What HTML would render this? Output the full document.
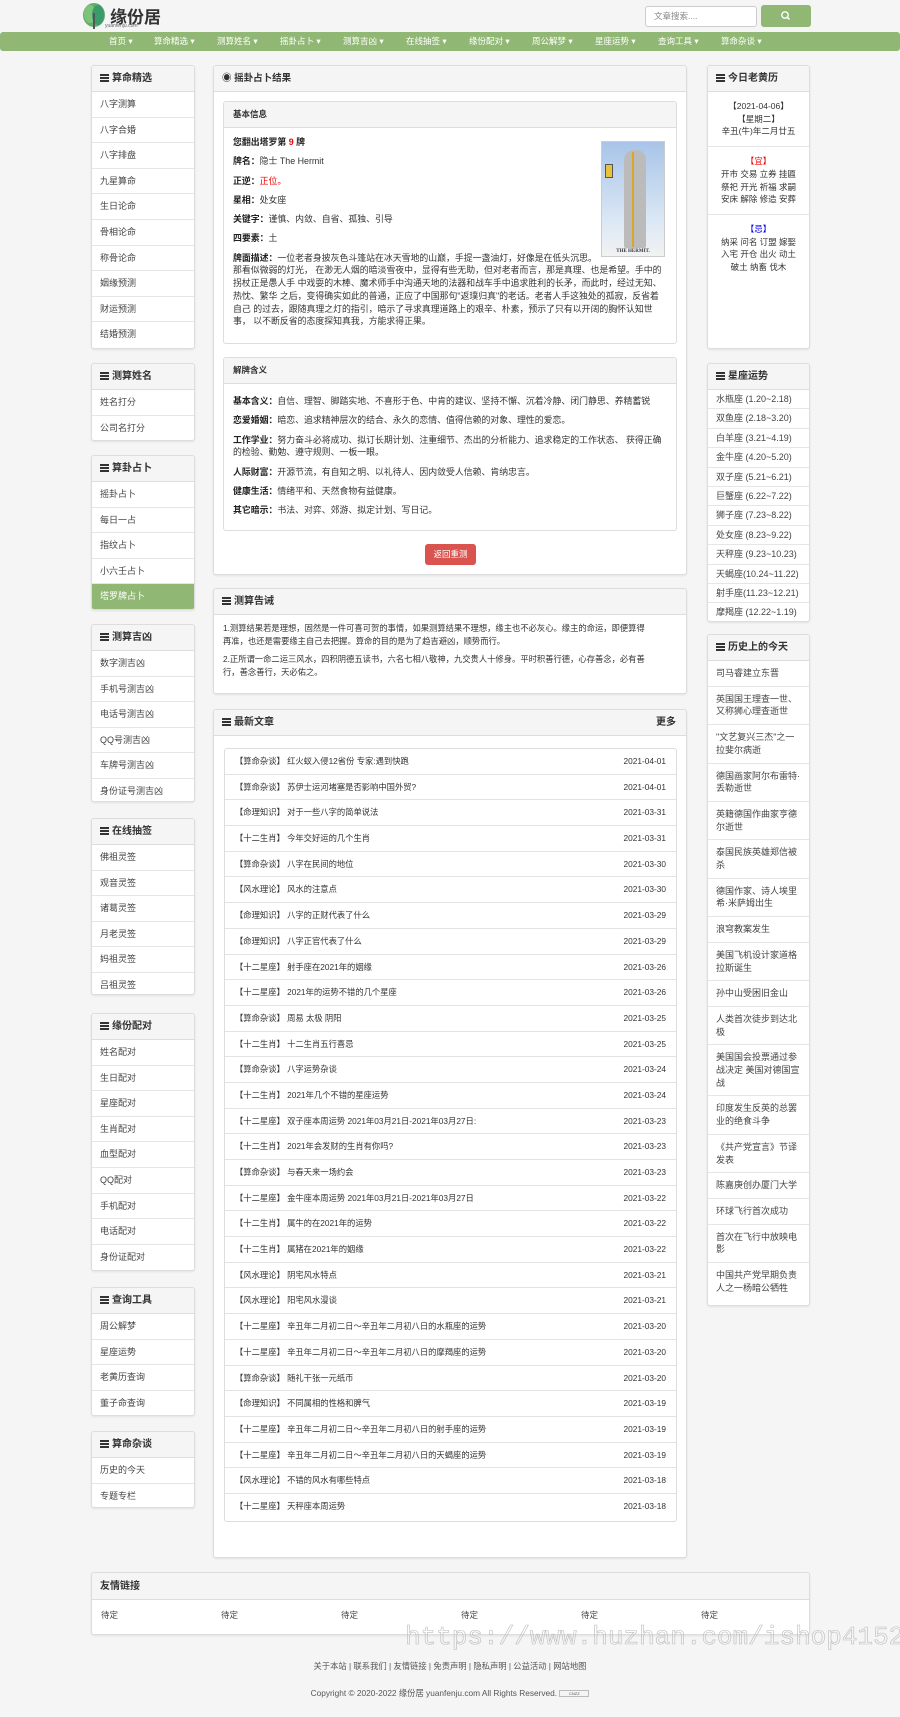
<!DOCTYPE html>
<html><head><meta charset="utf-8">
<style>
*{margin:0;padding:0;box-sizing:border-box}
body{width:900px;height:1717px;background:#f5f5f5;font-family:"Liberation Sans","Noto Sans CJK SC",sans-serif;color:#333;font-size:9px;position:relative;overflow:hidden}
.abs{position:absolute}
.nav{position:absolute;left:0;top:32px;width:900px;height:19px;background:#90b874;border-radius:3px;color:#fff;font-size:8.5px;line-height:19px}
.nav span{position:absolute;top:0;white-space:nowrap}
.panel{position:absolute;background:#fff;border:1px solid #ddd;border-radius:3px;box-shadow:0 1px 2px rgba(0,0,0,.08);overflow:hidden}
.ph{background:#f5f5f5;border-bottom:1px solid #ddd;height:26px;line-height:25px;padding-left:8px;font-size:10px;font-weight:bold;color:#333;white-space:nowrap}
.ico{display:inline-block;width:9px;height:8px;vertical-align:-1px;margin-right:3px;background:linear-gradient(#333 0 2px,transparent 2px 3px,#333 3px 5px,transparent 5px 6px,#333 6px 8px)}
.li{height:25.6px;line-height:25px;border-bottom:1px solid #e6e6e6;padding-left:8px;font-size:9px;color:#444;white-space:nowrap}
.li:last-child{border-bottom:none}
.sl{height:19.4px;line-height:19px}
.act{background:#90b874;color:#fff}
.hi{border-bottom:1px solid #e6e6e6;padding:6px 8px 6px;font-size:9px;line-height:12.7px;color:#444;white-space:nowrap}
.card{position:absolute;border:1px solid #ddd;border-radius:3px;background:#fff;overflow:hidden}
.ch{background:#f5f5f5;border-bottom:1px solid #ddd;height:26px;line-height:25px;padding-left:9px;font-size:8.5px;font-weight:bold}
.p{font-size:8.3px;line-height:12.7px;color:#333}
.card .p{font-size:8.9px;white-space:nowrap}
.p b{color:#222}
.ar{height:25.7px;line-height:25px;border-bottom:1px solid #e3e3e3;padding:0 10px;font-size:8.3px;color:#333;position:relative;white-space:nowrap}
.ar i{font-style:normal;position:absolute;right:10px;top:0}
.c{text-align:center;font-size:8.5px;line-height:12.7px;color:#333}
</style></head><body>
<div class="abs" style="left:82px;top:3px;width:24px;height:26px">
<svg width="24" height="27" viewBox="0 0 24 27"><ellipse cx="12" cy="12" rx="11" ry="12" fill="#5fae6a"/><ellipse cx="8" cy="11" rx="6" ry="9" fill="#7dc47a"/><ellipse cx="16" cy="12" rx="6" ry="10" fill="#3d9a6a"/><rect x="11" y="10" width="2" height="16" fill="#555"/></svg></div>
<div class="abs" style="left:110px;top:3px;font-size:17px;font-weight:bold;color:#333">缘份居</div>
<div class="abs" style="left:105px;top:23px;font-size:5px;color:#666">yuanfenju.com</div>
<div class="abs" style="left:645px;top:6px;width:112px;height:21px;border:1px solid #ccc;border-radius:3px;background:#fff;font-size:8.5px;color:#888;line-height:19px;padding-left:8px">文章搜索....</div>
<div class="abs" style="left:761px;top:5px;width:50px;height:22px;border-radius:3px;background:#90b874">
<svg width="50" height="22"><circle cx="24" cy="10" r="3.2" fill="none" stroke="#fff" stroke-width="1.4"/><line x1="26.3" y1="12.3" x2="28.5" y2="14.5" stroke="#fff" stroke-width="1.5"/></svg></div>
<div class="nav">
<span style="left:109px">首页 ▾</span><span style="left:154px">算命精选 ▾</span><span style="left:217px">测算姓名 ▾</span><span style="left:280px">摇卦占卜 ▾</span><span style="left:343px">测算吉凶 ▾</span><span style="left:406px">在线抽签 ▾</span><span style="left:469px">缘份配对 ▾</span><span style="left:532px">周公解梦 ▾</span><span style="left:595px">星座运势 ▾</span><span style="left:658px">查询工具 ▾</span><span style="left:721px">算命杂谈 ▾</span>
</div>

<div class="panel" style="left:91px;top:65px;width:104px;height:284px"><div class="ph"><span class="ico"></span>算命精选</div>
<div class="li">八字测算</div><div class="li">八字合婚</div><div class="li">八字排盘</div><div class="li">九星算命</div><div class="li">生日论命</div><div class="li">骨相论命</div><div class="li">称骨论命</div><div class="li">姻缘预测</div><div class="li">财运预测</div><div class="li">结婚预测</div></div>
<div class="panel" style="left:91px;top:363px;width:104px;height:78px"><div class="ph"><span class="ico"></span>测算姓名</div>
<div class="li">姓名打分</div><div class="li">公司名打分</div></div>
<div class="panel" style="left:91px;top:455px;width:104px;height:155px"><div class="ph"><span class="ico"></span>算卦占卜</div>
<div class="li">摇卦占卜</div><div class="li">每日一占</div><div class="li">指纹占卜</div><div class="li">小六壬占卜</div><div class="li act">塔罗牌占卜</div></div>
<div class="panel" style="left:91px;top:624px;width:104px;height:178px"><div class="ph"><span class="ico"></span>测算吉凶</div>
<div class="li">数字测吉凶</div><div class="li">手机号测吉凶</div><div class="li">电话号测吉凶</div><div class="li">QQ号测吉凶</div><div class="li">车牌号测吉凶</div><div class="li">身份证号测吉凶</div></div>
<div class="panel" style="left:91px;top:818px;width:104px;height:177px"><div class="ph"><span class="ico"></span>在线抽签</div>
<div class="li">佛祖灵签</div><div class="li">观音灵签</div><div class="li">诸葛灵签</div><div class="li">月老灵签</div><div class="li">妈祖灵签</div><div class="li">吕祖灵签</div></div>
<div class="panel" style="left:91px;top:1013px;width:104px;height:258px"><div class="ph"><span class="ico"></span>缘份配对</div>
<div class="li">姓名配对</div><div class="li">生日配对</div><div class="li">星座配对</div><div class="li">生肖配对</div><div class="li">血型配对</div><div class="li">QQ配对</div><div class="li">手机配对</div><div class="li">电话配对</div><div class="li">身份证配对</div></div>
<div class="panel" style="left:91px;top:1287px;width:104px;height:129px"><div class="ph"><span class="ico"></span>查询工具</div>
<div class="li">周公解梦</div><div class="li">星座运势</div><div class="li">老黄历查询</div><div class="li">董子命查询</div></div>
<div class="panel" style="left:91px;top:1431px;width:104px;height:77px"><div class="ph"><span class="ico"></span>算命杂谈</div>
<div class="li">历史的今天</div><div class="li">专题专栏</div></div>

<div class="panel" style="left:213px;top:65px;width:474px;height:510px"><div class="ph" style="font-size:9.5px">◉ 摇卦占卜结果</div>
<div class="card" style="left:9px;top:35px;width:454px;height:243px"><div class="ch">基本信息</div>
<div class="p" style="position:absolute;left:9px;top:34px;width:440px">
<div style="height:19.3px"><b>您翻出塔罗第 <span style="color:#e00">9</span> 牌</b></div>
<div style="height:19.3px"><b>牌名：</b>隐士 The Hermit</div>
<div style="height:19.3px"><b>正逆：</b><span style="color:#e00">正位。</span></div>
<div style="height:19.3px"><b>星相：</b>处女座</div>
<div style="height:19.3px"><b>关键字：</b>谨慎、内敛、自省、孤独、引导</div>
<div style="height:19.3px"><b>四要素：</b>土</div>
<div><b>牌面描述：</b>一位老者身披灰色斗篷站在冰天雪地的山巅，手提一盏油灯，好像是在低头沉思。<br>那看似微弱的灯光， 在渺无人烟的暗淡雪夜中，显得有些无助，但对老者而言，那是真理、也是希望。手中的<br>拐杖正是愚人手 中戏耍的木棒、魔术师手中沟通天地的法器和战车手中追求胜利的长矛，而此时，经过无知、<br>热忱、繁华 之后，变得确实如此的普通，正应了中国那句"返璞归真"的老话。老者人手这独处的孤寂，反省着<br>自己 的过去，跟随真理之灯的指引，暗示了寻求真理道路上的艰辛、朴素，预示了只有以开阔的胸怀认知世<br>事， 以不断反省的态度探知真我，方能求得正果。</div>
</div>
<div style="position:absolute;left:377px;top:39px;width:64px;height:116px;border:1px solid #ccc;background:linear-gradient(#a8c4e8,#dce8f5 70%,#f2f2f2)">
<div style="position:absolute;left:22px;top:8px;width:22px;height:98px;background:#bbb;border-radius:10px 10px 2px 2px"></div>
<div style="position:absolute;left:30px;top:10px;width:2px;height:95px;background:#d9a82a"></div>
<div style="position:absolute;left:3px;top:22px;width:8px;height:14px;background:#e8c33a;border:1px solid #555"></div>
<div style="position:absolute;left:0;bottom:2px;width:62px;text-align:center;font-size:5px;font-weight:bold;font-family:'Liberation Serif',serif">THE HERMIT.</div></div>
</div>
<div class="card" style="left:9px;top:291px;width:454px;height:174px"><div class="ch">解牌含义</div>
<div class="p" style="position:absolute;left:9px;top:37px;width:440px">
<div style="height:19.3px"><b>基本含义：</b>自信、理智、脚踏实地、不喜形于色、中肯的建议、坚持不懈、沉着冷静、闭门静思、养精蓄锐</div>
<div style="height:19.3px"><b>恋爱婚姻：</b>暗恋、追求精神层次的结合、永久的恋情、值得信赖的对象、理性的爱恋。</div>
<div style="height:32px"><b>工作学业：</b>努力奋斗必将成功、拟订长期计划、注重细节、杰出的分析能力、追求稳定的工作状态、 获得正确<br>的检验、勤勉、遵守规则、一板一眼。</div>
<div style="height:19.3px"><b>人际财富：</b>开源节流，有自知之明、以礼待人、因内敛受人信赖、肯纳忠言。</div>
<div style="height:19.3px"><b>健康生活：</b>情绪平和、天然食物有益健康。</div>
<div><b>其它暗示：</b>书法、对弈、郊游、拟定计划、写日记。</div>
</div></div>
<div class="abs" style="left:211px;top:478px;width:51px;height:21px;background:#d9534f;border-radius:3px;color:#fff;font-size:8.5px;line-height:21px;text-align:center">返回重测</div>
</div>

<div class="panel" style="left:213px;top:588px;width:474px;height:106px"><div class="ph"><span class="ico"></span>测算告诫</div>
<div class="p" style="padding:7px 9px 0">1.测算结果若是理想，固然是一件可喜可贺的事情，如果测算结果不理想，缘主也不必灰心。缘主的命运，即便算得<br>再准，也还是需要缘主自己去把握。算命的目的是为了趋吉避凶，顺势而行。<div style="height:6px"></div>2.正所谓一命二运三风水，四积阴德五读书，六名七相八敬神，九交贵人十修身。平时积善行德，心存善念，必有善<br>行，善念善行，天必佑之。</div></div>

<div class="panel" style="left:213px;top:709px;width:474px;height:849px"><div class="ph"><span class="ico"></span>最新文章<span style="position:absolute;right:10px">更多</span></div>
<div class="card" style="left:10px;top:38px;width:453px;height:774px">
<div class="ar">【算命杂谈】 红火蚁入侵12省份 专家:遇到快跑<i>2021-04-01</i></div>
<div class="ar">【算命杂谈】 苏伊士运河堵塞是否影响中国外贸?<i>2021-04-01</i></div>
<div class="ar">【命理知识】 对于一些八字的简单说法<i>2021-03-31</i></div>
<div class="ar">【十二生肖】 今年交好运的几个生肖<i>2021-03-31</i></div>
<div class="ar">【算命杂谈】 八字在民间的地位<i>2021-03-30</i></div>
<div class="ar">【风水理论】 风水的注意点<i>2021-03-30</i></div>
<div class="ar">【命理知识】 八字的正财代表了什么<i>2021-03-29</i></div>
<div class="ar">【命理知识】 八字正官代表了什么<i>2021-03-29</i></div>
<div class="ar">【十二星座】 射手座在2021年的姻缘<i>2021-03-26</i></div>
<div class="ar">【十二星座】 2021年的运势不错的几个星座<i>2021-03-26</i></div>
<div class="ar">【算命杂谈】 周易 太极 阴阳<i>2021-03-25</i></div>
<div class="ar">【十二生肖】 十二生肖五行喜忌<i>2021-03-25</i></div>
<div class="ar">【算命杂谈】 八字运势杂谈<i>2021-03-24</i></div>
<div class="ar">【十二生肖】 2021年几个不错的星座运势<i>2021-03-24</i></div>
<div class="ar">【十二星座】 双子座本周运势 2021年03月21日-2021年03月27日:<i>2021-03-23</i></div>
<div class="ar">【十二生肖】 2021年会发财的生肖有你吗?<i>2021-03-23</i></div>
<div class="ar">【算命杂谈】 与春天来一场约会<i>2021-03-23</i></div>
<div class="ar">【十二星座】 金牛座本周运势 2021年03月21日-2021年03月27日<i>2021-03-22</i></div>
<div class="ar">【十二生肖】 属牛的在2021年的运势<i>2021-03-22</i></div>
<div class="ar">【十二生肖】 属猪在2021年的姻缘<i>2021-03-22</i></div>
<div class="ar">【风水理论】 阴宅风水特点<i>2021-03-21</i></div>
<div class="ar">【风水理论】 阳宅风水漫谈<i>2021-03-21</i></div>
<div class="ar">【十二星座】 辛丑年二月初二日～辛丑年二月初八日的水瓶座的运势<i>2021-03-20</i></div>
<div class="ar">【十二星座】 辛丑年二月初二日～辛丑年二月初八日的摩羯座的运势<i>2021-03-20</i></div>
<div class="ar">【算命杂谈】 随礼干张一元纸币<i>2021-03-20</i></div>
<div class="ar">【命理知识】 不同属相的性格和脾气<i>2021-03-19</i></div>
<div class="ar">【十二星座】 辛丑年二月初二日～辛丑年二月初八日的射手座的运势<i>2021-03-19</i></div>
<div class="ar">【十二星座】 辛丑年二月初二日～辛丑年二月初八日的天蝎座的运势<i>2021-03-19</i></div>
<div class="ar">【风水理论】 不错的风水有哪些特点<i>2021-03-18</i></div>
<div class="ar" style="border-bottom:none">【十二星座】 天秤座本周运势<i>2021-03-18</i></div>
</div></div>

<div class="panel" style="left:707px;top:65px;width:103px;height:284px"><div class="ph"><span class="ico"></span>今日老黄历</div>
<div class="c" style="padding:8px 0 8px;border-bottom:1px solid #e6e6e6">【2021-04-06】<br>【星期二】<br>辛丑(牛)年二月廿五</div>
<div class="c" style="padding:8px 0 8px;border-bottom:1px solid #e6e6e6"><span style="color:#e00">【宜】</span><br>开市 交易 立券 挂匾<br>祭祀 开光 祈福 求嗣<br>安床 解除 修造 安葬</div>
<div class="c" style="padding:8px 0"><span style="color:#00e">【忌】</span><br>纳采 问名 订盟 嫁娶<br>入宅 开仓 出火 动土<br>破土 纳畜 伐木</div></div>
<div class="panel" style="left:707px;top:363px;width:103px;height:259px"><div class="ph"><span class="ico"></span>星座运势</div>
<div class="li sl">水瓶座 (1.20~2.18)</div><div class="li sl">双鱼座 (2.18~3.20)</div><div class="li sl">白羊座 (3.21~4.19)</div><div class="li sl">金牛座 (4.20~5.20)</div><div class="li sl">双子座 (5.21~6.21)</div><div class="li sl">巨蟹座 (6.22~7.22)</div><div class="li sl">狮子座 (7.23~8.22)</div><div class="li sl">处女座 (8.23~9.22)</div><div class="li sl">天秤座 (9.23~10.23)</div><div class="li sl">天蝎座(10.24~11.22)</div><div class="li sl">射手座(11.23~12.21)</div><div class="li sl">摩羯座 (12.22~1.19)</div></div>
<div class="panel" style="left:707px;top:634px;width:103px;height:672px"><div class="ph"><span class="ico"></span>历史上的今天</div>
<div class="hi">司马睿建立东晋</div>
<div class="hi">英国国王理查一世、<br>又称狮心理查逝世</div>
<div class="hi">"文艺复兴三杰"之一<br>拉斐尔病逝</div>
<div class="hi">德国画家阿尔布雷特·<br>丢勒逝世</div>
<div class="hi">英籍德国作曲家亨德<br>尔逝世</div>
<div class="hi">泰国民族英雄郑信被<br>杀</div>
<div class="hi">德国作家、诗人埃里<br>希·米萨姆出生</div>
<div class="hi">浪穹教案发生</div>
<div class="hi">美国飞机设计家道格<br>拉斯诞生</div>
<div class="hi">孙中山受困旧金山</div>
<div class="hi">人类首次徒步到达北<br>极</div>
<div class="hi">美国国会投票通过参<br>战决定 美国对德国宣<br>战</div>
<div class="hi">印度发生反英的总罢<br>业的绝食斗争</div>
<div class="hi">《共产党宣言》节译<br>发表</div>
<div class="hi">陈嘉庚创办厦门大学</div>
<div class="hi">环球飞行首次成功</div>
<div class="hi">首次在飞行中放映电<br>影</div>
<div class="hi" style="border-bottom:none">中国共产党早期负责<br>人之一杨暗公牺牲</div></div>

<div class="panel" style="left:91px;top:1572px;width:719px;height:63px"><div class="ph" style="height:27px;line-height:27px">友情链接</div>
<div style="position:relative;font-size:8.5px;color:#444;height:34px;line-height:30px">
<span class="abs" style="left:9px">待定</span><span class="abs" style="left:129px">待定</span><span class="abs" style="left:249px">待定</span><span class="abs" style="left:369px">待定</span><span class="abs" style="left:489px">待定</span><span class="abs" style="left:609px">待定</span></div></div>
<div class="abs" style="left:0;top:1660px;width:900px;text-align:center;font-size:8.3px;color:#555">关于本站 | 联系我们 | 友情链接 | 免责声明 | 隐私声明 | 公益活动 | 网站地图</div>
<div class="abs" style="left:0;top:1687px;width:900px;text-align:center;font-size:8.3px;color:#555">Copyright © 2020-2022 缘份居 yuanfenju.com All Rights Reserved. <span style="display:inline-block;width:30px;height:7px;border:1px solid #bbb;vertical-align:middle;font-size:4px;line-height:5px">CNZZ</span></div>
<div class="abs" style="left:405px;top:1622px;font-family:'Liberation Mono',monospace;font-size:26px;color:transparent;-webkit-text-stroke:0.6px #bbb;white-space:nowrap">https://www.huzhan.com/ishop41522</div>
</body></html>
